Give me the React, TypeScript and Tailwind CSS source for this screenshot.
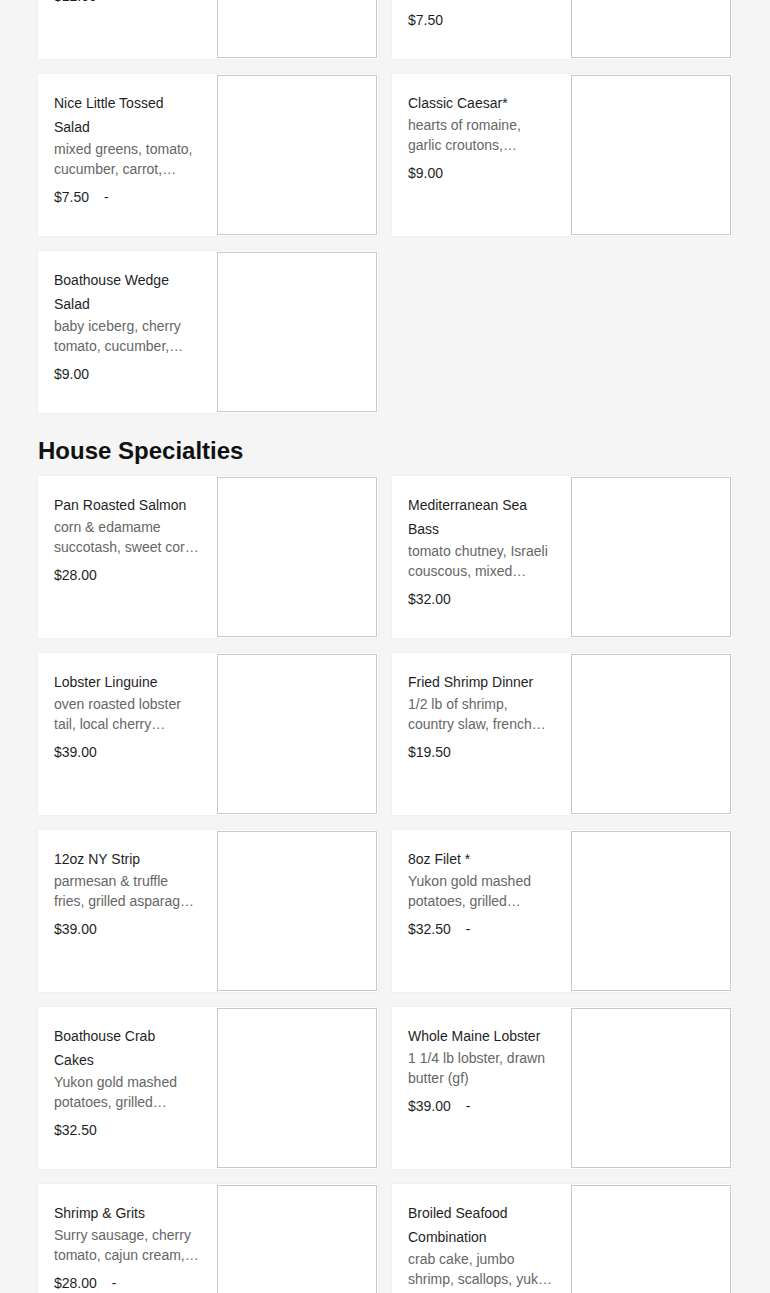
interface MenuItem {
  name: string;
  desc: string;
  price: string;
  dash?: boolean;
}

const salads: MenuItem[] = [
  { name: 'Maryland Crab Soup', desc: 'vegetables, lump crab meat, old bay broth', price: '$12.00' },
  { name: 'New England Clam Chowder', desc: 'cup of creamy chowder, clams, potatoes', price: '$7.50' },
  { name: 'Nice Little Tossed Salad', desc: 'mixed greens, tomato, cucumber, carrot, croutons, choice of dressing', price: '$7.50', dash: true },
  { name: 'Classic Caesar*', desc: 'hearts of romaine, garlic croutons, parmesan, caesar dressing', price: '$9.00' },
  { name: 'Boathouse Wedge Salad', desc: 'baby iceberg, cherry tomato, cucumber, bacon, blue cheese dressing', price: '$9.00' },
];

const specialties: MenuItem[] = [
  { name: 'Pan Roasted Salmon', desc: 'corn & edamame succotash, sweet corn puree', price: '$28.00' },
  { name: 'Mediterranean Sea Bass', desc: 'tomato chutney, Israeli couscous, mixed vegetables', price: '$32.00' },
  { name: 'Lobster Linguine', desc: 'oven roasted lobster tail, local cherry tomatoes, garlic cream', price: '$39.00' },
  { name: 'Fried Shrimp Dinner', desc: '1/2 lb of shrimp, country slaw, french fries, cocktail sauce', price: '$19.50' },
  { name: '12oz NY Strip', desc: 'parmesan & truffle fries, grilled asparagus, demi-glace', price: '$39.00' },
  { name: '8oz Filet *', desc: 'Yukon gold mashed potatoes, grilled asparagus, demi-glace', price: '$32.50', dash: true },
  { name: 'Boathouse Crab Cakes', desc: 'Yukon gold mashed potatoes, grilled asparagus, remoulade', price: '$32.50' },
  { name: 'Whole Maine Lobster', desc: '1 1/4 lb lobster, drawn butter (gf)', price: '$39.00', dash: true },
  { name: 'Shrimp & Grits', desc: 'Surry sausage, cherry tomato, cajun cream, stone-ground grits', price: '$28.00', dash: true },
  { name: 'Broiled Seafood Combination', desc: 'crab cake, jumbo shrimp, scallops, yukon gold mashed potatoes', price: '$42.00' },
];

const ItemCard = ({ item }: { item: MenuItem }) => (
  <div className="flex bg-white p-px shadow-[0_0_2px_rgba(0,0,0,0.06)]">
    <div className="flex-1 min-w-0 pl-[15px] pr-[17px] pt-4">
      <div className="pr-[3px] text-[14px] leading-[24px] text-[#1f1f1f]">{item.name}</div>
      <div className="text-[14px] leading-[20px] text-[#666666] line-clamp-2">{item.desc}</div>
      <div className="mt-2 flex text-[14px] leading-[20px] text-[#1f1f1f]">
        <span>{item.price}</span>
        {item.dash && <span className="ml-[15px]">-</span>}
      </div>
    </div>
    <div className="w-[160px] h-[160px] shrink-0 border border-[#c8c8c8] bg-white" />
  </div>
);

export default function App() {
  return (
    <div
      className="min-h-screen bg-[#f5f5f5] overflow-hidden"
      style={{ fontFamily: '"Liberation Sans", Arial, sans-serif' }}
    >
      <div className="-mt-[103px] px-[38px] pb-10">
        <div className="grid grid-cols-2 gap-x-[14px] gap-y-[15px] items-start">
          {salads.map((item) => (
            <ItemCard key={item.name} item={item} />
          ))}
        </div>
        <h2 className="mt-[22px] mb-[9px] text-[24px] leading-[32px] font-bold text-[#111111]">
          House Specialties
        </h2>
        <div className="grid grid-cols-2 gap-x-[14px] gap-y-[15px] items-start">
          {specialties.map((item) => (
            <ItemCard key={item.name} item={item} />
          ))}
        </div>
      </div>
    </div>
  );
}
